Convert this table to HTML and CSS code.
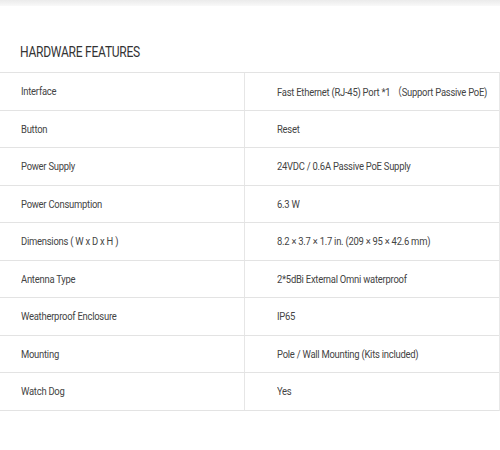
FILE: index.html
```html
<!DOCTYPE html>
<html>
<head>
<meta charset="utf-8">
<link rel="stylesheet" href="styles.css">
</head>
<body>
<div class="topbar"></div>
<h2 class="title"><span class="ht">HARDWARE FEATURES</span></h2>
<div class="specs">
  <div class="row"><div class="k"><span class="t">Interface</span></div><div class="v"><span class="t">Fast Ethernet (RJ-45) Port *1 （Support Passive PoE)</span></div></div>
  <div class="row"><div class="k"><span class="t">Button</span></div><div class="v"><span class="t">Reset</span></div></div>
  <div class="row"><div class="k"><span class="t">Power Supply</span></div><div class="v"><span class="t">24VDC / 0.6A Passive PoE Supply</span></div></div>
  <div class="row"><div class="k"><span class="t">Power Consumption</span></div><div class="v"><span class="t">6.3 W</span></div></div>
  <div class="row"><div class="k"><span class="t">Dimensions ( W x D x H )</span></div><div class="v"><span class="t">8.2 × 3.7 × 1.7 in. (209 × 95 × 42.6 mm)</span></div></div>
  <div class="row"><div class="k"><span class="t">Antenna Type</span></div><div class="v"><span class="t">2*5dBi External Omni waterproof</span></div></div>
  <div class="row"><div class="k"><span class="t">Weatherproof Enclosure</span></div><div class="v"><span class="t">IP65</span></div></div>
  <div class="row"><div class="k"><span class="t">Mounting</span></div><div class="v"><span class="t">Pole / Wall Mounting (Kits included)</span></div></div>
  <div class="row"><div class="k"><span class="t">Watch Dog</span></div><div class="v"><span class="t">Yes</span></div></div>
</div>
</body>
</html>
```
FILE: styles.css
```css
html, body {
  margin: 0;
  padding: 0;
  background: #fff;
  font-family: Roboto, "Liberation Sans", "Noto Sans CJK SC", sans-serif;
  overflow: hidden;
}
.topbar {
  height: 6px;
  background: linear-gradient(#ebebeb, #f9f9f9);
}
.title {
  margin: 0;
  padding: 38px 0 0 20px;
  height: 28px;
  font-size: 14px;
  font-weight: 400;
  color: #333;
  line-height: 16px;
}
.ht {
  display: inline-block;
  letter-spacing: -0.3px;
  transform: scaleX(0.86);
  transform-origin: 0 50%;
  white-space: nowrap;
}
.specs {
  border-top: 1px solid #e3e3e3;
  width: 499px;
  border-right: 1px solid #e8e8e8;
}
.row {
  display: grid;
  grid-template-columns: 245px 254px;
  height: 37.5px;
  box-sizing: border-box;
  border-bottom: 1px solid #e3e3e3;
}
.k, .v {
  display: flex;
  align-items: center;
  font-size: 11.5px;
  color: #444;
  white-space: nowrap;
  overflow: hidden;
}
.t {
  display: inline-block;
  letter-spacing: -0.3px;
  transform: scaleX(0.82);
  transform-origin: 0 50%;
}
.k {
  padding-left: 21px;
  border-right: 1px solid #e6e6e6;
}
.v {
  padding-left: 32px;
}
```
